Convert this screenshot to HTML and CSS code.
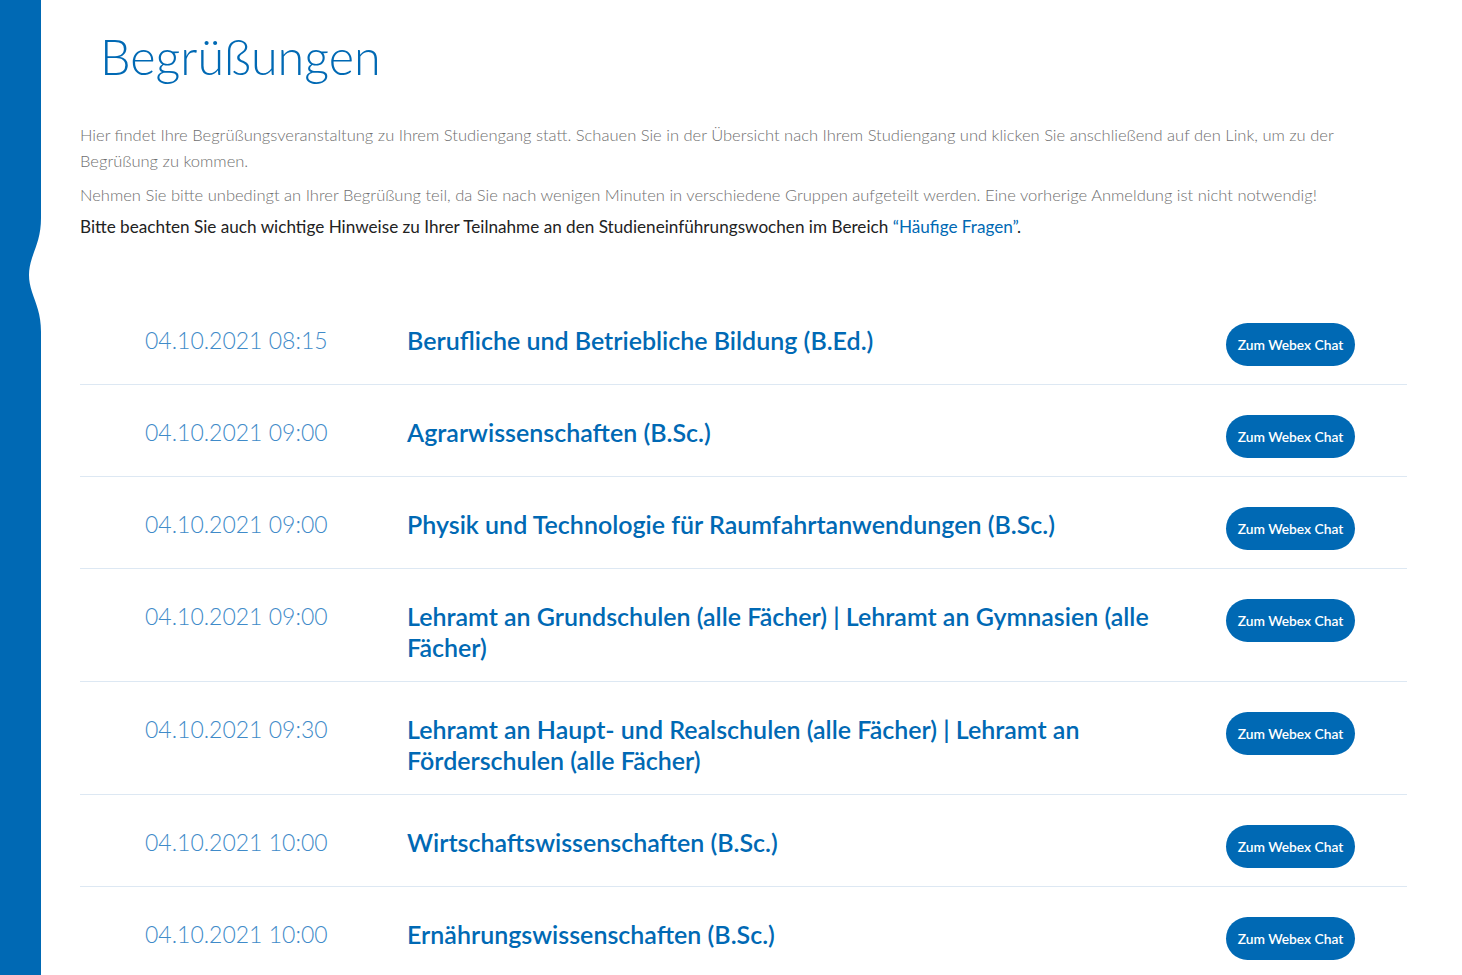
FILE: index.html
```html
<!DOCTYPE html>
<html lang="de">
<head>
    <meta charset="UTF-8">
    <title>Begrüßungen</title>
    <link rel="stylesheet" href="styles.css">
</head>
<body>
    <div id="page">
        <div class="side-bar">
            <!-- wave cut-out in the blue bar -->
            <svg class="side-wave" width="41" height="114" viewBox="0 0 41 114">
                <path d="M41 0 C41 18 36 28 32 40 C28 52 28 62 32 74 C36 86 41 96 41 114 Z" fill="#fff"/>
            </svg>
        </div>

        <div class="content">
            <h1 class="page-title">Begrüßungen</h1>

            <div class="intro">
                <p class="muted first">Hier findet Ihre Begrüßungsveranstaltung zu Ihrem Studiengang statt. Schauen Sie in der Übersicht nach Ihrem Studiengang und klicken Sie anschließend auf den Link, um zu der Begrüßung zu kommen.</p>
                <p class="muted">Nehmen Sie bitte unbedingt an Ihrer Begrüßung teil, da Sie nach wenigen Minuten in verschiedene Gruppen aufgeteilt werden. Eine vorherige Anmeldung ist nicht notwendig!</p>
                <p>Bitte beachten Sie auch wichtige Hinweise zu Ihrer Teilnahme an den Studieneinführungswochen im Bereich <a href="#">“Häufige Fragen”</a>.</p>
            </div>

            <div class="event-list">
                <div class="event">
                    <div class="event-date">04.10.2021 08:15</div>
                    <div class="event-title">Berufliche und Betriebliche Bildung (B.Ed.)</div>
                    <a href="#" class="btn">Zum Webex Chat</a>
                </div>
                <div class="event">
                    <div class="event-date">04.10.2021 09:00</div>
                    <div class="event-title">Agrarwissenschaften (B.Sc.)</div>
                    <a href="#" class="btn">Zum Webex Chat</a>
                </div>
                <div class="event">
                    <div class="event-date">04.10.2021 09:00</div>
                    <div class="event-title">Physik und Technologie für Raumfahrtanwendungen (B.Sc.)</div>
                    <a href="#" class="btn">Zum Webex Chat</a>
                </div>
                <div class="event">
                    <div class="event-date">04.10.2021 09:00</div>
                    <div class="event-title">Lehramt an Grundschulen (alle Fächer) | Lehramt an Gymnasien (alle Fächer)</div>
                    <a href="#" class="btn">Zum Webex Chat</a>
                </div>
                <div class="event">
                    <div class="event-date">04.10.2021 09:30</div>
                    <div class="event-title">Lehramt an Haupt- und Realschulen (alle Fächer) | Lehramt an Förderschulen (alle Fächer)</div>
                    <a href="#" class="btn">Zum Webex Chat</a>
                </div>
                <div class="event">
                    <div class="event-date">04.10.2021 10:00</div>
                    <div class="event-title">Wirtschaftswissenschaften (B.Sc.)</div>
                    <a href="#" class="btn">Zum Webex Chat</a>
                </div>
                <div class="event">
                    <div class="event-date">04.10.2021 10:00</div>
                    <div class="event-title">Ernährungswissenschaften (B.Sc.)</div>
                    <a href="#" class="btn">Zum Webex Chat</a>
                </div>
            </div>
        </div>
    </div>
</body>
</html>
```

FILE: styles.css
```css
/* Page frame */
body {
    margin: 0;
    font-family: Lato, "Open Sans", sans-serif;
    background-color: #fff;
    color: #222;
}

#page {
    display: flex;
    min-height: 100vh;
}

.side-bar {
    position: relative;
    flex: 0 0 41px;
    background-color: #0069b4;
}

.side-wave {
    position: absolute;
    top: 218px;
    left: 0;
}

.content {
    flex: 1;
    padding: 0 55px 0 39px;
}

/* Heading and intro text */
.page-title {
    margin: 26px 0 0 20px;
    font-size: 48.5px;
    font-weight: 300;
    line-height: 60px;
    color: #0069b4;
}

.intro {
    margin-top: 36px;
}

.intro p {
    margin: 0 0 6px;
    font-size: 17.15px;
    line-height: 26px;
}

.intro .muted {
    font-size: 16.55px;
    font-weight: 300;
    color: #6f6f6f;
}

.intro .first {
    margin-bottom: 8px;
}

.intro a {
    color: #0069b4;
    text-decoration: none;
}

/* Event rows */
.event-list {
    margin-top: 53px;
}

.event {
    display: grid;
    grid-template-columns: 262px 1fr 129px;
    align-items: start;
    padding: 30px 52px 18px 65px;
    border-bottom: 1px solid #dde8f3;
}

.event:last-child {
    border-bottom: none;
}

.event-date {
    margin-top: 2px;
    font-size: 23px;
    font-weight: 300;
    line-height: 31px;
    color: #3f8bc9;
}

.event-title {
    margin-top: 2px;
    padding-right: 40px;
    font-size: 25px;
    font-weight: 600;
    line-height: 31px;
    color: #0069b4;
}

.btn {
    display: block;
    height: 43px;
    line-height: 43px;
    text-align: center;
    font-size: 13.8px;
    font-weight: 600;
    color: #fff;
    text-decoration: none;
    border-radius: 22px;
    background-color: #0069b4;
}
```
